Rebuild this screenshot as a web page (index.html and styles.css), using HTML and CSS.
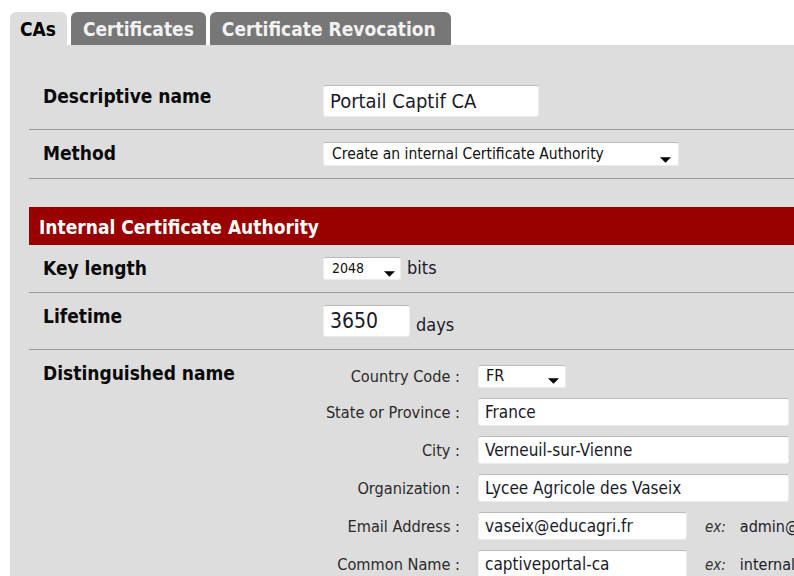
FILE: index.html
```html
<!DOCTYPE html>
<html lang="en">
<head>
<meta charset="utf-8">
<title>Certificate Manager</title>
<link rel="stylesheet" href="styles.css">
</head>
<body>
<div class="page">
  <nav class="tabs">
    <a class="tab tab-active">CAs</a>
    <a class="tab">Certificates</a>
    <a class="tab">Certificate Revocation</a>
  </nav>
  <div class="panel">
    <form class="form">
      <div class="row">
        <div class="label">Descriptive name</div>
        <div class="value"><input class="field field-name" type="text" value="Portail Captif CA"></div>
      </div>
      <div class="row">
        <div class="label">Method</div>
        <div class="value">
          <span class="select select-method">
            <select><option>Create an internal Certificate Authority</option></select>
            <svg class="caret" viewBox="0 0 12 6"><path d="M0 0H12L6 6Z"/></svg>
          </span>
        </div>
      </div>
      <div class="spacer"></div>
      <div class="section-head">Internal Certificate Authority</div>
      <div class="row">
        <div class="label">Key length</div>
        <div class="value inline">
          <span class="select select-key">
            <select><option>2048</option></select>
            <svg class="caret" viewBox="0 0 12 6"><path d="M0 0H12L6 6Z"/></svg>
          </span>
          <span class="unit">bits</span>
        </div>
      </div>
      <div class="row">
        <div class="label">Lifetime</div>
        <div class="value inline">
          <input class="field field-days" type="text" value="3650">
          <span class="unit unit-days">days</span>
        </div>
      </div>
      <div class="row row-dn">
        <div class="label">Distinguished name</div>
        <div class="value">
          <div class="dn">
            <label class="dn-label">Country Code :</label>
            <div class="dn-value">
              <span class="select select-country">
                <select><option>FR</option></select>
                <svg class="caret" viewBox="0 0 12 6"><path d="M0 0H12L6 6Z"/></svg>
              </span>
            </div>
            <label class="dn-label">State or Province :</label>
            <div class="dn-value"><input class="field field-dn" type="text" value="France"></div>
            <label class="dn-label">City :</label>
            <div class="dn-value"><input class="field field-dn" type="text" value="Verneuil-sur-Vienne"></div>
            <label class="dn-label">Organization :</label>
            <div class="dn-value"><input class="field field-dn" type="text" value="Lycee Agricole des Vaseix"></div>
            <label class="dn-label">Email Address :</label>
            <div class="dn-value">
              <input class="field field-short" type="text" value="vaseix@educagri.fr">
              <span class="hint"><em>ex:</em>admin@mycompany.com</span>
            </div>
            <label class="dn-label">Common Name :</label>
            <div class="dn-value">
              <input class="field field-short" type="text" value="captiveportal-ca">
              <span class="hint"><em>ex:</em>internal-ca</span>
            </div>
          </div>
        </div>
      </div>
    </form>
  </div>
</div>
</body>
</html>
```
FILE: styles.css
```css
html, body {
  margin: 0;
  padding: 0;
  background: #ffffff;
  overflow: hidden;
}

body {
  font-family: "DejaVu Sans Condensed", "DejaVu Sans", sans-serif;
  font-stretch: condensed;
  color: #111;
}

.page {
  width: 960px;
  padding: 12px 0 0 10px;
}

/* tab strip */
.tabs {
  display: flex;
  gap: 4px;
  height: 33px;
}

.tab {
  display: flex;
  align-items: center;
  padding: 1px 12px 0 12px;
  background: #777777;
  color: #f2f2f2;
  font-weight: bold;
  font-size: 19px;
  border-radius: 6px 6px 0 0;
}

.tab:last-child {
  padding-right: 15px;
}

.tab-active {
  background: #dddddd;
  color: #000;
  padding: 1px 11px 0 10px;
}

/* main panel */
.panel {
  background: #dddddd;
  padding: 28px 0 40px 19px;
  min-height: 560px;
}

.row {
  display: grid;
  grid-template-columns: 294px 1fr;
  border-bottom: 1px solid #9a9a9a;
  padding: 12px 0;
}

.label {
  padding-left: 14px;
  font-size: 19px;
  line-height: 23px;
  font-weight: bold;
  color: #0a0a0a;
}

.value.inline {
  display: flex;
  align-items: center;
}

.spacer {
  height: 28px;
}

.section-head {
  background: #990000;
  color: #ffffff;
  font-weight: bold;
  font-size: 19px;
  height: 38px;
  line-height: 40px;
  padding-left: 10px;
}

/* text inputs */
.field {
  box-sizing: border-box;
  margin: 0;
  background: #ffffff;
  border: 1px solid #ececec;
  border-top-color: #b9b9b9;
  border-radius: 3px;
  font-family: inherit;
  font-stretch: condensed;
  color: #1a1a2a;
  padding: 0 6px;
  outline: none;
}

.field-name {
  width: 216px;
  height: 32px;
  font-size: 20px;
}

.field-days {
  width: 87px;
  height: 32px;
  font-size: 21px;
}

.field-dn {
  width: 311px;
  height: 28px;
  font-size: 17px;
}

.field-short {
  width: 209px;
  height: 28px;
  font-size: 17px;
}

.unit {
  font-size: 18px;
  margin-left: 6px;
  padding-bottom: 2px;
  color: #1a1a2a;
}

.unit-days {
  margin-left: 6px;
  padding-top: 8px;
}

/* drop-down selects */
.select {
  position: relative;
  display: inline-block;
  vertical-align: top;
}

.select select {
  appearance: none;
  -webkit-appearance: none;
  box-sizing: border-box;
  margin: 0;
  background: #ffffff;
  border: 1px solid #ececec;
  border-top-color: #b9b9b9;
  border-radius: 3px;
  font-family: inherit;
  font-stretch: condensed;
  color: #111;
  outline: none;
  display: block;
}

.select .caret {
  position: absolute;
  right: 8px;
  bottom: 3px;
  width: 11px;
  height: 6px;
  fill: #000;
}

.select-method select {
  width: 356px;
  height: 24px;
  font-size: 15.5px;
  padding: 1px 0 1px 8px;
}

.select-key select {
  width: 78px;
  height: 23px;
  font-size: 14px;
  padding: 0 0 1px 8px;
}

.select-key .caret {
  right: 6px;
}

.select-country select {
  width: 88px;
  height: 23px;
  font-size: 16px;
  padding: 0 0 3px 7px;
}

.select-country .caret {
  right: 7px;
  bottom: 4px;
}

/* distinguished name sub-form */
.dn {
  display: grid;
  grid-template-columns: 137px auto;
  column-gap: 18px;
  row-gap: 10px;
  margin-top: 3px;
}

.dn-label {
  font-size: 16.2px;
  color: #2a2a2a;
  text-align: right;
  align-self: center;
  white-space: nowrap;
}

.dn-value {
  display: flex;
  align-items: center;
  white-space: nowrap;
}

.hint {
  margin-left: 18px;
  font-size: 16px;
  color: #1a1a2a;
}

.hint em {
  font-size: 15px;
  margin-right: 14px;
  color: #333;
}
```
